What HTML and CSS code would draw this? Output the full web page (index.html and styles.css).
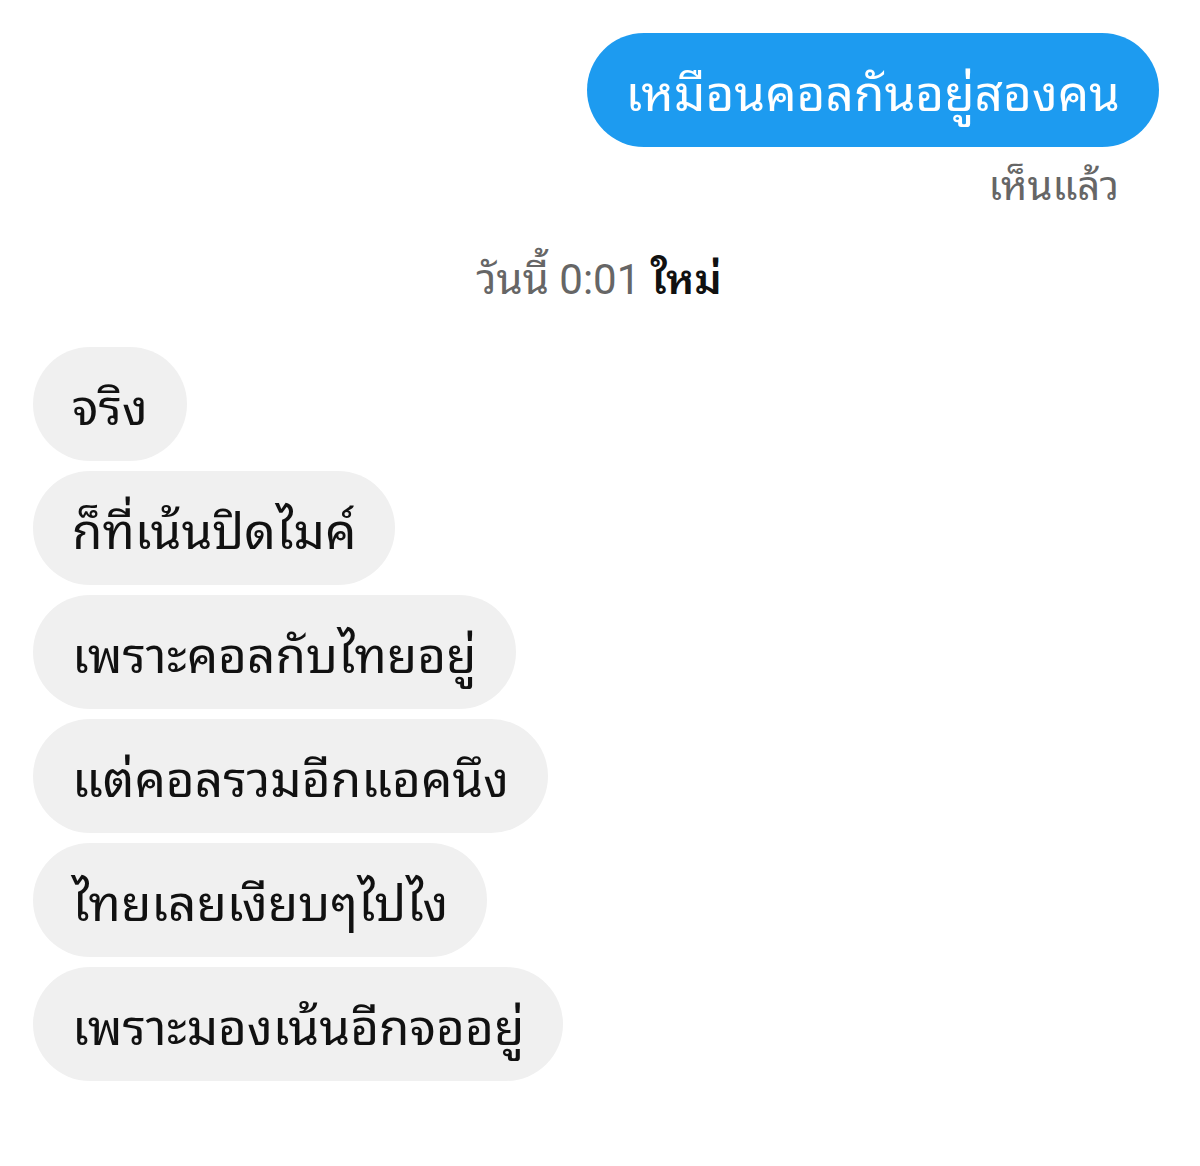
FILE: index.html
```html
<!DOCTYPE html>
<html lang="th">
<head>
<meta charset="utf-8">
<link rel="stylesheet" href="styles.css">
</head>
<body>
<div class="chat">
  <div class="out">
    <div class="bubble blue">เหมือนคอลกันอยู่สองคน</div>
    <div class="seen">เห็นแล้ว</div>
  </div>
  <div class="stamp">วันนี้ 0:01 <b>ใหม่</b></div>
  <div class="in">
    <div class="bubble grey">จริง</div>
    <div class="bubble grey">ก็ที่เน้นปิดไมค์</div>
    <div class="bubble grey">เพราะคอลกับไทยอยู่</div>
    <div class="bubble grey">แต่คอลรวมอีกแอคนึง</div>
    <div class="bubble grey">ไทยเลยเงียบๆไปไง</div>
    <div class="bubble grey">เพราะมองเน้นอีกจออยู่</div>
  </div>
</div>
</body>
</html>
```
FILE: styles.css
```css
html, body { margin: 0; background: #fff; }
body { font-family: Roboto, "Noto Sans Thai Looped", sans-serif; width: 1200px; height: 1166px; overflow: hidden; }
.chat { padding: 33px 41px 0 33px; display: flex; flex-direction: column; }
.out { display: flex; flex-direction: column; align-items: flex-end; }
.bubble { height: 114px; border-radius: 57px; display: flex; align-items: center; padding: 0 39px 4px; font-size: 49.5px; box-sizing: border-box; white-space: nowrap; }
.blue { background: #1d9bf0; color: #fff; }
.seen { color: #666; font-size: 40px; margin-top: 16px; margin-right: 40px; line-height: 48px; }
.stamp { align-self: center; margin-top: 42px; color: #666; font-size: 42px; line-height: 54px; margin-left: 6px; }
.stamp b { color: #111; font-weight: 600; }
.in { display: flex; flex-direction: column; align-items: flex-start; gap: 10px; margin-top: 40px; }
.grey { background: #f0f0f0; color: #111; }
```
